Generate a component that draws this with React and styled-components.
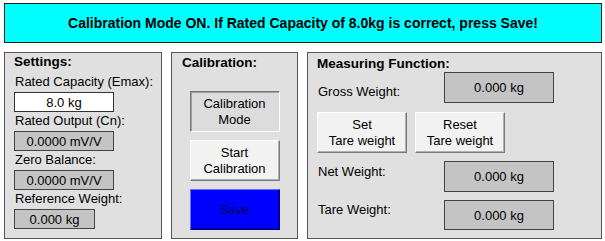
import React from "react";
import styled, {createGlobalStyle} from "styled-components";

const GlobalStyle = createGlobalStyle`
  body {
    margin: 0;
    background: #fff;
    font-family: "Liberation Sans", Arial, sans-serif;
    font-size: 13px;
    color: #000;
  }
`

const Page = styled.div`
  width: 598px;
  padding: 3px 4px;
  display: flex;
  flex-direction: column;
  gap: 9px;
`

const Banner = styled.div`
  height: 38px;
  border: 1px solid #222;
  background: #00ffff;
  display: flex;
  align-items: center;
  justify-content: center;
  font-weight: bold;
  font-size: 14px;
`

const Panels = styled.div`
  display: grid;
  grid-template-columns: 158px 127px 295px;
  column-gap: 9px;
  height: 187px;
`

const Panel = styled.div`
  border: 1px solid #555;
  background: #e0e0e0;
  padding: ${p => p.$top || 1}px 9px 0 9px;
  display: flex;
  flex-direction: column;
  align-items: ${p => p.$center ? "center" : "stretch"};
`

const Title = styled.div`
  font-weight: bold;
  font-size: 13.5px;
  line-height: 16px;
  align-self: flex-start;
  padding-left: ${p => p.$indent || 0}px;
  margin-bottom: ${p => p.$after || 0}px;
`

const Label = styled.div`
  line-height: 16px;
  padding-left: 1px;
  margin-top: ${p => p.$offset || 0}px;
  white-space: nowrap;
`

const Field = styled.div`
  display: flex;
  flex-direction: column;
  gap: 2px;
  margin-bottom: 1px;
`

const Value = styled.div`
  box-sizing: border-box;
  width: ${p => p.$width}px;
  height: ${p => p.$height || 20}px;
  border: 1px solid ${p => p.$input ? "#333" : "#444"};
  background: ${p => p.$input ? "#fff" : "#c4c4c4"};
  display: flex;
  align-items: center;
  justify-content: center;
  white-space: nowrap;
`

const Button = styled.div`
  box-sizing: border-box;
  width: ${p => p.$width || 90}px;
  height: 41px;
  margin-top: ${p => p.$gap || 0}px;
  display: flex;
  align-items: center;
  justify-content: center;
  text-align: center;
  line-height: 16px;
  background: ${p => p.$pressed ? "#dcdcdc" : p.$blue ? "#0000ff" : "#f2f2f2"};
  color: ${p => p.$blue ? "#000060" : "#000"};
  border: 1px solid;
  border-color: ${p => p.$pressed
    ? "#777 #fff #fff #777"
    : p.$blue ? "#6a6aff #00007a #00007a #6a6aff" : "#fff #7a7a7a #7a7a7a #fff"};
  box-shadow: ${p => p.$pressed
    ? "inset 1px 1px 0 #a0a0a0"
    : p.$blue ? "inset -1px -1px 0 #0000b8" : "inset -1px -1px 0 #b0b0b0"};
`

const Row = styled.div`
  display: flex;
  align-items: flex-start;
  margin-top: ${p => p.$gap || 0}px;
`

const RowLabel = styled(Label)`
  width: 126px;
`

const ButtonRow = styled.div`
  display: flex;
  gap: 8px;
  margin-top: 9px;
`

const settings = [
    {label: "Rated Capacity (Emax):", value: "8.0 kg", width: 100, input: true},
    {label: "Rated Output (Cn):", value: "0.0000 mV/V", width: 100},
    {label: "Zero Balance:", value: "0.0000 mV/V", width: 100},
    {label: "Reference Weight:", value: "0.000 kg", width: 81},
]

const App = () => {
    return (<>
        <GlobalStyle/>
        <Page>
            <Banner>Calibration Mode ON. If Rated Capacity of 8.0kg is correct, press Save!</Banner>
            <Panels>
                <Panel $top={1}>
                    <Title $after={4}>Settings:</Title>
                    {settings.map(s => (
                        <Field key={s.label}>
                            <Label>{s.label}</Label>
                            <Value $width={s.width} $input={s.input}>{s.value}</Value>
                        </Field>
                    ))}
                </Panel>
                <Panel $top={2} $center>
                    <Title $indent={1}>Calibration:</Title>
                    <Button $pressed $gap={20}>Calibration<br/>Mode</Button>
                    <Button $gap={8}>Start<br/>Calibration</Button>
                    <Button $blue $gap={8}>Save</Button>
                </Panel>
                <Panel $top={3}>
                    <Title>Measuring Function:</Title>
                    <Row>
                        <RowLabel $offset={12}>Gross Weight:</RowLabel>
                        <Value $width={110} $height={31}>0.000 kg</Value>
                    </Row>
                    <ButtonRow>
                        <Button>Set<br/>Tare weight</Button>
                        <Button>Reset<br/>Tare weight</Button>
                    </ButtonRow>
                    <Row $gap={8}>
                        <RowLabel $offset={3}>Net Weight:</RowLabel>
                        <Value $width={110} $height={31}>0.000 kg</Value>
                    </Row>
                    <Row $gap={8}>
                        <RowLabel $offset={2}>Tare Weight:</RowLabel>
                        <Value $width={110} $height={30}>0.000 kg</Value>
                    </Row>
                </Panel>
            </Panels>
        </Page>
    </>)
}

export default App
